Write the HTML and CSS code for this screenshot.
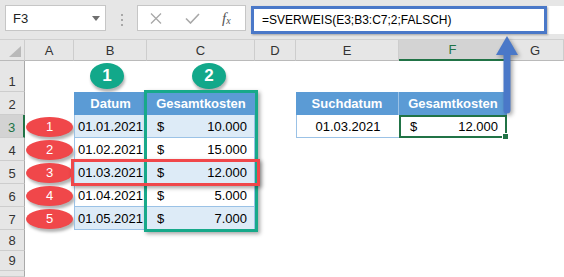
FILE: index.html
```html
<!DOCTYPE html>
<html lang="de">
<head>
    <meta charset="UTF-8">
    <title>SVERWEIS Beispiel</title>
    <link rel="stylesheet" href="styles.css">
</head>
<body>
<div class="page">
    <!-- Formula bar -->
    <div class="toolbar">
        <div class="name-box">
            <span>F3</span>
            <svg class="caret" width="8" height="5" viewBox="0 0 8 5"><path d="M0 0H8L4 5Z" fill="#6f6f6f"/></svg>
        </div>
        <div class="grip"><i></i><i></i><i></i></div>
        <div class="fn-box">
            <svg class="ico-x" width="12" height="11" viewBox="0 0 12 11"><path d="M1 0.5L11 10.5M11 0.5L1 10.5" stroke="#a8a8a8" stroke-width="1.3"/></svg>
            <svg class="ico-ok" width="15" height="11" viewBox="0 0 15 11"><path d="M1 5.5L5.5 10L14 1" stroke="#a8a8a8" stroke-width="1.6" fill="none"/></svg>
            <span class="fx">f<sub>x</sub></span>
        </div>
        <div class="formula-bar">
            <div class="formula-hl">=SVERWEIS(E3;B3:C7;2;FALSCH)</div>
        </div>
    </div>

    <!-- Sheet grid -->
    <div class="sheet">
        <div class="col-head corner">
            <svg width="12" height="11" viewBox="0 0 12 11"><path d="M12 0V11H0Z" fill="#b9b9b9"/></svg>
        </div>
        <div class="col-head">A</div>
        <div class="col-head">B</div>
        <div class="col-head">C</div>
        <div class="col-head">D</div>
        <div class="col-head">E</div>
        <div class="col-head sel">F</div>
        <div class="col-head">G</div>

        <div class="row-head">1</div>
        <div class="step step-1">1</div>
        <div class="step step-2">2</div>

        <div class="row-head">2</div>
        <div class="cell th col-b">Datum</div>
        <div class="cell th col-c">Gesamtkosten</div>
        <div class="cell th col-e">Suchdatum</div>
        <div class="cell th col-f">Gesamtkosten</div>

        <div class="row-head sel">3</div>
        <div class="badge">1</div>
        <div class="cell date col-b stripe">01.01.2021</div>
        <div class="cell amount col-c stripe"><span>$</span><span>10.000</span></div>
        <div class="cell date col-e lookup">01.03.2021</div>
        <div class="cell amount col-f result"><span>$</span><span>12.000</span></div>

        <div class="row-head">4</div>
        <div class="badge">2</div>
        <div class="cell date col-b">01.02.2021</div>
        <div class="cell amount col-c"><span>$</span><span>15.000</span></div>

        <div class="row-head">5</div>
        <div class="badge">3</div>
        <div class="cell date col-b stripe">01.03.2021</div>
        <div class="cell amount col-c stripe"><span>$</span><span>12.000</span></div>

        <div class="row-head">6</div>
        <div class="badge">4</div>
        <div class="cell date col-b">01.04.2021</div>
        <div class="cell amount col-c"><span>$</span><span>5.000</span></div>

        <div class="row-head">7</div>
        <div class="badge">5</div>
        <div class="cell date col-b stripe">01.05.2021</div>
        <div class="cell amount col-c stripe"><span>$</span><span>7.000</span></div>

        <div class="row-head">8</div>
        <div class="row-head">9</div>
        <div class="row-head"></div>
    </div>

    <!-- Annotations -->
    <div class="frame frame-green"></div>
    <div class="frame frame-red"></div>
    <svg class="arrow" width="26" height="82" viewBox="0 0 26 82">
        <path d="M13 2L24 21H2Z" fill="#4a78c8"/>
        <path d="M9.5 20H16.5V76A3.5 3.5 0 0 1 9.5 76Z" fill="#4a78c8"/>
    </svg>
</div>
</body>
</html>
```

FILE: styles.css
```css
body {
    margin: 0;
    background-color: white;
    font-family: "Liberation Sans", Arial, sans-serif;
}

.page {
    position: relative;
    width: 564px;
    height: 277px;
    overflow: hidden;
}

/* ---- formula bar ---- */
.toolbar {
    height: 40px;
    box-sizing: border-box;
    display: flex;
    align-items: flex-start;
    padding: 5px 0 0 5px;
    background-color: #e6e6e6;
    border-bottom: 1px solid #d0d0d0;
}

.name-box {
    width: 101px;
    height: 26px;
    box-sizing: border-box;
    display: flex;
    align-items: center;
    justify-content: space-between;
    padding: 0 5px 0 7px;
    background-color: white;
    border: 1px solid #c6c6c6;
    font-size: 13px;
    color: #222;
}

.grip {
    width: 31px;
    display: flex;
    flex-direction: column;
    align-items: center;
    gap: 3px;
    padding-top: 9px;
}

.grip i {
    width: 2px;
    height: 2px;
    background-color: #a8a8a8;
}

.fn-box {
    width: 109px;
    height: 26px;
    box-sizing: border-box;
    display: flex;
    align-items: center;
    background-color: white;
    border: 1px solid #c6c6c6;
}

.ico-x {
    margin-left: 12px;
}

.ico-ok {
    margin-left: 23px;
}

.fx {
    margin-left: 22px;
    font-family: "Liberation Serif", "Times New Roman", serif;
    font-style: italic;
    font-size: 15px;
    color: #555;
}

.fx sub {
    font-size: 10px;
    vertical-align: -1px;
}

.formula-bar {
    flex: 1;
    height: 28px;
    margin: 1px 0 0 5px;
    background-color: white;
}

.formula-hl {
    width: 296px;
    height: 100%;
    box-sizing: border-box;
    padding-left: 8px;
    border: 3px solid #4a78c8;
    box-shadow: 1px 1px 2px rgba(0, 0, 0, 0.3);
    font-size: 12px;
    line-height: 22px;
    color: #000;
}

/* ---- sheet ---- */
.sheet {
    height: 237px;
    display: grid;
    grid-template-columns: 25px 49px 73px 108px 41px 103px 108px 1fr;
    grid-template-rows: 21px 31px repeat(6, 23px) 21px 20px 1fr;
}

.col-head {
    box-sizing: border-box;
    display: flex;
    align-items: center;
    justify-content: center;
    background-color: #e6e6e6;
    border-right: 1px solid #cdcdcd;
    border-bottom: 1px solid #bababa;
    font-size: 13px;
    color: #333;
}

.col-head.sel {
    background-color: #d3d3d3;
    color: #217346;
    border-bottom: 2px solid #217346;
}

.corner {
    align-items: flex-end;
    justify-content: flex-end;
    padding: 0 3px 3px 0;
}

.corner svg {
    display: block;
}

.row-head {
    grid-column: 1;
    box-sizing: border-box;
    display: flex;
    align-items: flex-end;
    justify-content: center;
    padding-bottom: 2px;
    background-color: #e6e6e6;
    border-right: 1px solid #a9a9a9;
    border-bottom: 1px solid #cdcdcd;
    font-size: 13px;
    line-height: 15px;
    color: #333;
}

.row-head.sel {
    background-color: #d3d3d3;
    color: #217346;
    border-right: 2px solid #217346;
}

.col-b { grid-column: 3; }
.col-c { grid-column: 4; }
.col-e { grid-column: 6; }
.col-f { grid-column: 7; }

.cell {
    box-sizing: border-box;
    display: flex;
    align-items: center;
    font-size: 13px;
    color: #000;
    border-bottom: 1px solid #9bc2e6;
}

.th {
    justify-content: center;
    background-color: #5b9bd5;
    color: white;
    font-weight: bold;
    border-bottom: none;
}

.th.col-e {
    border-right: 1px solid #9bc2e6;
}

.date {
    justify-content: center;
}

.col-b.date {
    border-left: 1px solid #9bc2e6;
    border-right: 1px solid #9bc2e6;
}

.amount {
    justify-content: space-between;
    padding: 0 7px 0 10px;
    border-right: 1px solid #9bc2e6;
}

.stripe {
    background-color: #ddebf7;
}

.lookup {
    border-left: 1px solid #9bc2e6;
}

.result {
    position: relative;
    padding: 0 7px 0 9px;
    border: 2px solid #217346;
}

.result::after {
    content: "";
    position: absolute;
    right: -4px;
    bottom: -4px;
    width: 5px;
    height: 5px;
    background-color: #217346;
    border: 1px solid white;
}

/* ---- numbered markers ---- */
.badge {
    grid-column: 2;
    justify-self: center;
    align-self: center;
    width: 47px;
    height: 20px;
    display: flex;
    align-items: center;
    justify-content: center;
    border-radius: 50%;
    background-color: #f0474a;
    box-shadow: 2px 3px 3px rgba(0, 0, 0, 0.3);
    font-size: 13px;
    color: white;
}

.step {
    align-self: start;
    justify-self: start;
    width: 34px;
    height: 26px;
    margin-top: 2px;
    display: flex;
    align-items: center;
    justify-content: center;
    border-radius: 50%;
    background-color: #12a88a;
    box-shadow: 1px 3px 3px rgba(0, 0, 0, 0.3);
    font-size: 17px;
    font-weight: bold;
    color: white;
}

.step-1 {
    grid-column: 3;
    margin-left: 16px;
}

.step-2 {
    grid-column: 4;
    margin-left: 45px;
}

/* ---- overlays ---- */
.frame {
    position: absolute;
    box-sizing: border-box;
    border: 3px solid;
    box-shadow: 2px 2px 4px rgba(0, 0, 0, 0.35);
}

.frame-green {
    left: 144px;
    top: 90px;
    width: 114px;
    height: 142px;
    border-color: #17a98a;
}

.frame-red {
    left: 71px;
    top: 159px;
    width: 189px;
    height: 27px;
    border-color: #f0474a;
}

.arrow {
    position: absolute;
    left: 494px;
    top: 34px;
    filter: drop-shadow(2px 2px 2px rgba(0, 0, 0, 0.35));
}
```
